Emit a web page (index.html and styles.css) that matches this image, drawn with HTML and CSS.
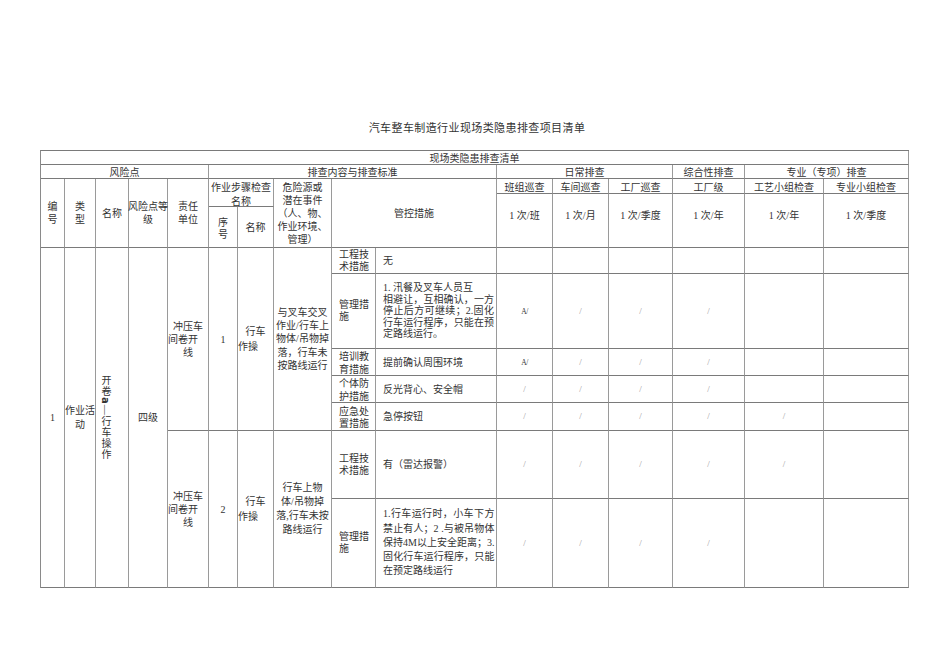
FILE: index.html
```html
<!DOCTYPE html>
<html lang="zh-CN">
<head>
<meta charset="utf-8">
<title>汽车整车制造行业现场类隐患排查项目清单</title>
<link rel="stylesheet" href="styles.css">
</head>
<body>
<div class="page">
  <h1 class="title">汽车整车制造行业现场类隐患排查项目清单</h1>
  <div class="sheet">
    <!-- row 1 -->
    <div class="full hb">现场类隐患排查清单</div>
    <!-- row 2 -->
    <div class="c5 hb">风险点</div>
    <div class="c5 hb">排查内容与排查标准</div>
    <div class="c3 hb">日常排查</div>
    <div class="hb">综合性排查</div>
    <div class="c2 hb">专业（专项）排查</div>
    <!-- row 3 -->
    <div class="r3">编<br>号</div>
    <div class="r3">类<br>型</div>
    <div class="r3">名称</div>
    <div class="r3">风险点等<br>级</div>
    <div class="r3">责任<br>单位</div>
    <div class="c2 r2 step">作业步骤检查<br>名称</div>
    <div class="r3">危险源或<br>潜在事件<br>（人、物、<br>作业环境、<br>管理）</div>
    <div class="c2 r3">管控措施</div>
    <div class="hb">班组巡查</div>
    <div class="hb">车间巡查</div>
    <div class="hb">工厂巡查</div>
    <div class="hb">工厂级</div>
    <div class="hb">工艺小组检查</div>
    <div class="hb">专业小组检查</div>
    <!-- row 4 -->
    <div class="r2 freq">1 次/班</div>
    <div class="r2 freq">1 次/月</div>
    <div class="r2 freq">1 次/季度</div>
    <div class="r2 freq">1 次/年</div>
    <div class="r2 freq">1 次/年</div>
    <div class="r2 freq">1 次/季度</div>
    <!-- row 5 -->
    <div class="seq">序<br>号</div>
    <div>名称</div>

    <!-- body row 6 -->
    <div class="r7">1</div>
    <div class="r7 lh14">作业活<br>动</div>
    <div class="r7 vcell"><span class="vert">开卷<b class="va">a</b>—行车操作</span></div>
    <div class="r7">四级</div>
    <div class="r5 lines lh13"><div class="box"><span class="ln">冲压车</span><span class="ln left">间卷开</span><span class="ln">线</span></div></div>
    <div class="r5">1</div>
    <div class="r5 lines lh15"><div class="box"><span class="ln">行车</span><span class="ln left">作操</span></div></div>
    <div class="r5 haz1">与叉车交叉<br>作业/行车上<br>物体/吊物掉<br>落，行车未<br>按路线运行</div>
    <div class="m">工程技<br>术措施</div>
    <div class="d">无</div>
    <div></div><div></div><div></div><div></div><div></div><div></div>
    <!-- row 7 -->
    <div class="m">管理措<br>施</div>
    <div class="d d1"><div class="txt"><span class="ln">1. 汛餐及叉车人员互</span><span class="jl">相避让，互相确认，一方</span><span class="jl">停止后方可继续；2.固化</span><span class="jl">行车运行程序，只能在预</span><span class="ln">定路线运行。</span></div></div>
    <div><span class="a">A/</span></div>
    <div><span class="s">/</span></div>
    <div><span class="s">/</span></div>
    <div><span class="s">/</span></div>
    <div></div><div></div>
    <!-- row 8 -->
    <div class="m low">培训教<br>育措施</div>
    <div class="d">提前确认周围环境</div>
    <div><span class="a">A/</span></div>
    <div><span class="s">/</span></div>
    <div><span class="s">/</span></div>
    <div><span class="s">/</span></div>
    <div></div><div></div>
    <!-- row 9 -->
    <div class="m low">个体防<br>护措施</div>
    <div class="d">反光背心、安全帽</div>
    <div><span class="s">/</span></div>
    <div><span class="s">/</span></div>
    <div><span class="s">/</span></div>
    <div><span class="s">/</span></div>
    <div></div><div></div>
    <!-- row 10 -->
    <div class="m low">应急处<br>置措施</div>
    <div class="d">急停按钮</div>
    <div><span class="s">/</span></div>
    <div><span class="s">/</span></div>
    <div><span class="s">/</span></div>
    <div><span class="s">/</span></div>
    <div><span class="s">/</span></div>
    <div></div>
    <!-- row 11 -->
    <div class="r2 lines lh13"><div class="box"><span class="ln">冲压车</span><span class="ln left">间卷开</span><span class="ln">线</span></div></div>
    <div class="r2">2</div>
    <div class="r2 lines lh15"><div class="box"><span class="ln">行车</span><span class="ln left">作操</span></div></div>
    <div class="r2 haz2">行车上物<br>体/吊物掉<br>落,行车未按<br>路线运行</div>
    <div class="m">工程技<br>术措施</div>
    <div class="d">有（雷达报警）</div>
    <div><span class="s">/</span></div>
    <div><span class="s">/</span></div>
    <div><span class="s">/</span></div>
    <div><span class="s">/</span></div>
    <div><span class="s">/</span></div>
    <div></div>
    <!-- row 12 -->
    <div class="m">管理措<br>施</div>
    <div class="d d2"><div class="txt"><span class="jl">1.行车运行时，小车下方</span><span class="jl">禁止有人；2 .与被吊物体</span><span class="jl">保持4M以上安全距离；3.</span><span class="jl">固化行车运行程序，只能</span><span class="ln">在预定路线运行</span></div></div>
    <div><span class="s">/</span></div>
    <div><span class="s">/</span></div>
    <div><span class="s">/</span></div>
    <div><span class="s">/</span></div>
    <div></div><div></div>
  </div>
</div>
</body>
</html>
```

FILE: styles.css
```css
html, body {
  margin: 0;
  padding: 0;
  background: #ffffff;
}

body {
  font-family: "Liberation Serif", "Noto Sans CJK SC", serif;
  color: #333333;
}

.page {
  padding-top: 121px;
}

.title {
  margin: 0 0 15px 0;
  padding-left: 4px;
  font-size: 11px;
  line-height: 14px;
  font-weight: normal;
  letter-spacing: 0.4px;
  text-align: center;
  color: #333333;
}

.sheet {
  display: grid;
  grid-template-columns: 24px 31px 33px 39px 41px 29px 36px 58px 44px 121px 56px 56px 64px 72px 79px 85px;
  grid-template-rows: 14px 14px 15px 13px 41px 26px 75px 27px 27px 28px 68px 89px;
  width: max-content;
  margin-left: 40px;
  border-top: 1px solid #7a7a7a;
  border-left: 1px solid #8a8a8a;
}

.sheet > div {
  box-sizing: border-box;
  min-width: 0;
  display: flex;
  align-items: center;
  justify-content: center;
  text-align: center;
  white-space: nowrap;
  font-size: 10px;
  line-height: 13px;
  border-right: 1px solid #9a9a9a;
  border-bottom: 1px solid #7a7a7a;
  overflow: visible;
}

.full { grid-column: span 16; }
.c2 { grid-column: span 2; }
.c3 { grid-column: span 3; }
.c5 { grid-column: span 5; }
.r2 { grid-row: span 2; }
.r3 { grid-row: span 3; }
.r5 { grid-row: span 5; }
.r7 { grid-row: span 7; }

.sheet > .hb {
  align-items: flex-end;
  line-height: 11px;
}

.sheet > .step {
  padding-top: 5px;
  line-height: 14px;
}

.sheet > .seq {
  padding-top: 3px;
  line-height: 12px;
}

.sheet > .freq {
  padding-bottom: 10px;
}

.sheet > .lh14 { line-height: 14px; }

.sheet > .lines .box {
  width: 100%;
}

.sheet > .lh13 { line-height: 13px; }
.sheet > .lh15 { line-height: 15px; }

.ln {
  display: block;
}

.ln.left {
  text-align: left;
}

.sheet > .haz1 { line-height: 13.2px; }
.sheet > .haz2 { line-height: 14px; }

.sheet > .m {
  justify-content: flex-start;
  text-align: left;
  padding-left: 7px;
  line-height: 12px;
}

.sheet > .m.low {
  padding-top: 3px;
  line-height: 12.5px;
}

.sheet > .d {
  justify-content: flex-start;
  text-align: left;
  padding-left: 7px;
  padding-right: 2px;
}

.d .txt {
  width: 112px;
}

.d1 .txt { line-height: 11.65px; }
.d2 .txt { line-height: 14.2px; }

.jl {
  display: block;
  text-align: justify;
  text-align-last: justify;
}

.vcell.vcell {
  justify-content: flex-start;
  padding-left: 3px;
}

.vert {
  writing-mode: vertical-rl;
  letter-spacing: 1px;
  line-height: 12px;
}

.va {
  font-family: "DejaVu Sans", sans-serif;
  font-weight: bold;
  font-size: 10px;
}

.s {
  font-size: 9px;
  color: #9a9a9a;
}

.a {
  font-size: 7.5px;
  color: #333333;
  letter-spacing: -0.5px;
}
```
